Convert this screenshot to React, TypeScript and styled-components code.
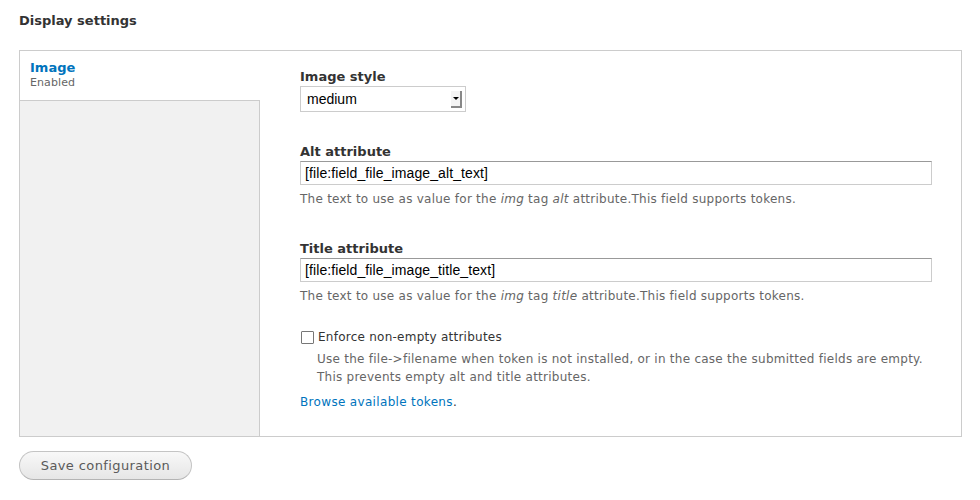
import styled, { createGlobalStyle } from "styled-components"

const GlobalStyle = createGlobalStyle`
	body {
		margin: 0;
		background: #ffffff;
		font-family: "DejaVu Sans", Verdana, sans-serif;
		font-size: 13px;
		color: #333333;
	}
`

const Page = styled.div`
	padding: 13px 18px 0 19px;
`

const Heading = styled.h2`
	margin: 0;
	font-size: 13px;
	font-weight: bold;
	color: #333333;
	line-height: 16px;
`

const Fieldset = styled.div`
	margin-top: 21px;
	border: 1px solid #cccccc;
	display: flex;
	height: 385px;
`

const TabMenu = styled.div`
	width: 240px;
	display: flex;
	flex-direction: column;
`

const Tab = styled.div`
	background: #ffffff;
	padding: 9px 10px 9px 10px;
	height: 31px;
`

const TabTitle = styled.a`
	display: block;
	color: #0074bd;
	font-weight: bold;
	font-size: 13px;
	line-height: 16px;
	text-decoration: none;
`

const TabSummary = styled.div`
	font-size: 11px;
	line-height: 14px;
	color: #666666;
	letter-spacing: 0.1px;
`

const TabFiller = styled.div`
	flex: 1;
	background: #f1f1f1;
	border-top: 1px solid #cccccc;
	border-right: 1px solid #cccccc;
`

const Pane = styled.div`
	flex: 1;
	padding: 18px 29px 0 40px;
	overflow: hidden;
`

const Item = styled.div<{ $gap?: number }>`
	margin-bottom: ${(p) => p.$gap ?? 0}px;
`

const Label = styled.label`
	display: block;
	font-weight: bold;
	font-size: 13px;
	line-height: 16px;
	margin-bottom: 1px;
`

const Select = styled.div`
	width: 166px;
	height: 26px;
	box-sizing: border-box;
	border: 1px solid #cccccc;
	display: flex;
	align-items: center;
	justify-content: space-between;
	padding: 0 3px 0 6px;
	font-family: "Liberation Sans", Arial, sans-serif;
	font-size: 14px;
	color: #000000;
`

const SelectArrow = styled.span`
	width: 11px;
	height: 17px;
	box-sizing: border-box;
	background: #f4f4f4;
	border-right: 2px solid #888888;
	border-bottom: 2px solid #888888;
	display: flex;
	align-items: center;
	justify-content: center;

	&::after {
		content: "";
		border-left: 3px solid transparent;
		border-right: 3px solid transparent;
		border-top: 3px solid #000000;
	}
`

const TextInput = styled.input`
	display: block;
	width: 100%;
	height: 24px;
	box-sizing: border-box;
	border: 1px solid #cccccc;
	border-top-color: #999999;
	padding: 0 4px;
	font-family: "Liberation Sans", Arial, sans-serif;
	font-size: 14px;
	letter-spacing: 0.1px;
	color: #000000;
	outline: none;
`

const Description = styled.div<{ $indent?: number }>`
	font-size: 12px;
	line-height: 18px;
	letter-spacing: 0.25px;
	color: #666666;
	margin-top: 5px;
	padding-left: ${(p) => p.$indent ?? 0}px;
	white-space: nowrap;
`

const CheckRow = styled.label`
	display: flex;
	align-items: center;
	gap: 4px;
	font-size: 12px;
	line-height: 16px;
	letter-spacing: 0.25px;
	color: #333333;
`

const Box = styled.span`
	width: 13px;
	height: 13px;
	box-sizing: border-box;
	border: 1px solid #777777;
	border-radius: 1px;
	margin-left: 1px;
	background: #ffffff;
`

const LinkLine = styled.div`
	font-size: 12px;
	line-height: 16px;
	letter-spacing: 0.33px;
	color: #333333;
`

const Link = styled.a`
	color: #0074bd;
	text-decoration: none;
`

const Button = styled.button`
	margin-top: 14px;
	width: 173px;
	height: 29px;
	border: 1px solid #c4c4c4;
	border-bottom-color: #b4b4b4;
	border-radius: 15px;
	background: linear-gradient(#f8f8f8, #e6e6e6);
	font-family: "DejaVu Sans", Verdana, sans-serif;
	font-size: 13px;
	letter-spacing: 0.4px;
	color: #5a5a5a;
	padding: 0;
`

export default function App() {
	return (
		<>
			<GlobalStyle />
			<Page>
				<Heading>Display settings</Heading>
				<Fieldset>
					<TabMenu>
						<Tab>
							<TabTitle href="#">Image</TabTitle>
							<TabSummary>Enabled</TabSummary>
						</Tab>
						<TabFiller />
					</TabMenu>
					<Pane>
						<Item $gap={32}>
							<Label>Image style</Label>
							<Select>
								<span>medium</span>
								<SelectArrow />
							</Select>
						</Item>
						<Item $gap={33}>
							<Label>Alt attribute</Label>
							<TextInput readOnly value="[file:field_file_image_alt_text]" />
							<Description>
								The text to use as value for the <em>img</em> tag <em>alt</em> attribute.This field supports tokens.
							</Description>
						</Item>
						<Item $gap={24}>
							<Label>Title attribute</Label>
							<TextInput readOnly value="[file:field_file_image_title_text]" />
							<Description>
								The text to use as value for the <em>img</em> tag <em>title</em> attribute.This field supports tokens.
							</Description>
						</Item>
						<Item $gap={8}>
							<CheckRow>
								<Box />
								Enforce non-empty attributes
							</CheckRow>
							<Description $indent={17}>
								Use the file-&gt;filename when token is not installed, or in the case the submitted fields are empty.
								<br />
								This prevents empty alt and title attributes.
							</Description>
						</Item>
						<LinkLine>
							<Link href="#">Browse available tokens</Link>.
						</LinkLine>
					</Pane>
				</Fieldset>
				<Button>Save configuration</Button>
			</Page>
		</>
	)
}
